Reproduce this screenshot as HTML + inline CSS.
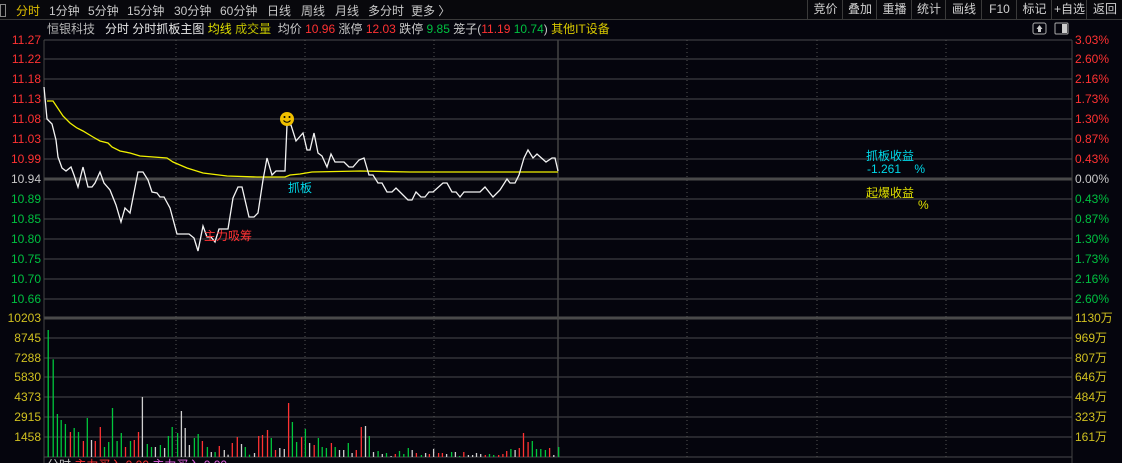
<!DOCTYPE html>
<html style="overflow:hidden;height:463px"><head><meta charset="utf-8">
<style>
body{margin:0;width:1122px;height:463px;overflow:hidden;background:#05050d;font-family:"Liberation Sans","Noto Sans CJK SC",sans-serif;font-size:12px;position:relative}
.t{position:absolute;white-space:nowrap;line-height:14px}
#top{position:absolute;left:0;top:0;width:1122px;height:19px;background:#08080c;border-bottom:1px solid #3a3a3a}
.tab{position:absolute;top:2px;color:#c8c8c8;font-size:12px}
.btn{position:absolute;top:0;height:19px;line-height:19px;text-align:center;color:#d0d0d0;border-left:1px solid #3a3a3a;font-size:12px}
.r{color:#ff3232}.g{color:#00c040}.w{color:#c8c8c8}.y{color:#e0e000}.c{color:#00d8e8}
.la{position:absolute;right:1081px;font-size:12px;line-height:14px;text-align:right}
.ra{position:absolute;left:1075px;font-size:12px;line-height:14px}
</style></head><body>
<div id="top">
<div style="position:absolute;left:0;top:4px;width:4px;height:11px;border:1px solid #888"></div>
<span class="tab" style="left:16px;color:#e0c000">分时</span>
<span class="tab" style="left:49px">1分钟</span>
<span class="tab" style="left:88px">5分钟</span>
<span class="tab" style="left:127px">15分钟</span>
<span class="tab" style="left:174px">30分钟</span>
<span class="tab" style="left:220px">60分钟</span>
<span class="tab" style="left:267px">日线</span>
<span class="tab" style="left:301px">周线</span>
<span class="tab" style="left:335px">月线</span>
<span class="tab" style="left:368px">多分时</span>
<span class="tab" style="left:411px">更多 〉</span>
<div class="btn" style="left:807px;width:35px">竞价</div>
<div class="btn" style="left:842px;width:34px">叠加</div>
<div class="btn" style="left:876px;width:35px">重播</div>
<div class="btn" style="left:911px;width:34px">统计</div>
<div class="btn" style="left:945px;width:36px">画线</div>
<div class="btn" style="left:981px;width:35px">F10</div>
<div class="btn" style="left:1016px;width:35px">标记</div>
<div class="btn" style="left:1051px;width:35px">+自选</div>
<div class="btn" style="left:1086px;width:36px">返回</div>
</div>
<div class="t" style="left:47px;top:22px;color:#b8b8b8">恒银科技 &nbsp;&nbsp;<span style="color:#e8e8e8">分时 分时抓板主图</span> <span class="y">均线</span> <span style="color:#c0c000">成交量</span> &nbsp;<span class="w">均价 </span><span class="r">10.96</span> <span class="w">涨停 </span><span class="r">12.03</span> <span class="w">跌停 </span><span class="g">9.85</span> <span class="w">笼子(</span><span class="r">11.19</span> <span class="g">10.74</span><span class="w">)</span> <span style="color:#d8c800">其他IT设备</span></div>
<svg style="position:absolute;left:0;top:0" width="1122" height="463">
<rect x="1033" y="23" width="13" height="11" rx="2" fill="none" stroke="#aaa"/><path d="M1039.5 25l-3 4h6z M1038 29h3v3h-3z" fill="#ccc"/>
<rect x="1055" y="23" width="13" height="11" rx="1" fill="none" stroke="#aaa"/><rect x="1062" y="24" width="5" height="9" fill="#ccc"/>
<g id="grid" stroke="#333338" stroke-width="1.5"></g>
<line x1="44" y1="40" x2="44" y2="463" stroke="#444" />
<line x1="1072" y1="40" x2="1072" y2="463" stroke="#444"/>
<g id="bars"></g>
<polyline id="avg" fill="none" stroke="#f0f000" stroke-width="1.3"/>
<polyline id="px" fill="none" stroke="#f4f4f4" stroke-width="1.3"/>
<circle cx="287" cy="119" r="7" fill="#f0c000"/><circle cx="284.5" cy="117" r="1" fill="#000"/><circle cx="289.5" cy="117" r="1" fill="#000"/><path d="M283.5 120.5q3.5 3.5 7 0" stroke="#000" fill="none"/>
</svg>
<div class="t c" style="left:288px;top:181px">抓板</div>
<div class="t r" style="left:204px;top:229px">主力吸筹</div>
<div class="t c" style="left:866px;top:149px">抓板收益</div>
<div class="t c" style="left:867px;top:162px">-1.261 &nbsp;&nbsp;&nbsp;%</div>
<div class="t y" style="left:866px;top:186px">起爆收益</div>
<div class="t y" style="left:918px;top:198px">%</div>
<div style="position:absolute;left:47px;top:458px;height:5px;width:300px;overflow:hidden"><div class="t" style="left:0;top:0;color:#c8c8c8">分时 <span class="r">主力买入 0.00</span> <span style="color:#e060e0">主力买入 0.00</span></div></div>
<div id="labels"></div>
<script>
var grid=document.getElementById('grid'),s='';
var ys=[40,59,79,99,119,139,159,179,199,219,239,259,279,299,318,338,358,377,397,417,437,457];
ys.forEach(function(y){var thick=(y==179||y==318);s+='<line x1="44" x2="1072" y1="'+y+'" y2="'+y+'" stroke="'+(thick?'#4a4a4a':'#333338')+'" stroke-width="'+(thick?3:1.5)+'"/>';});
[176,305,434,687,817,946].forEach(function(x){s+='<line x1="'+x+'" x2="'+x+'" y1="40" y2="457" stroke="#555" stroke-width="1" stroke-dasharray="1,3"/>';});
s+='<line x1="558" x2="558" y1="40" y2="457" stroke="#444"/>';
grid.innerHTML=s;
var px=[[44,87],[47,119],[52,124],[56,140],[58,157],[62,168],[66,171],[71,167],[74,175],[78,187],[83,167],[88,187],[92,187],[95,183],[100,172],[104,183],[110,190],[116,205],[121,222],[125,208],[130,213],[138,172],[143,172],[148,180],[152,192],[157,193],[160,197],[164,197],[170,208],[177,234],[189,234],[194,238],[198,251],[203,226],[207,237],[211,237],[215,242],[219,229],[228,229],[233,198],[238,187],[242,187],[249,217],[254,217],[258,213],[263,180],[267,158],[272,175],[276,171],[285,171],[287,125],[291,125],[296,141],[303,133],[307,150],[310,150],[314,133],[318,153],[322,156],[327,167],[331,154],[335,162],[344,162],[349,167],[353,167],[359,160],[364,158],[369,175],[373,175],[378,183],[382,183],[387,192],[392,192],[396,188],[403,195],[408,200],[412,200],[416,192],[421,197],[425,197],[429,192],[433,192],[443,183],[447,183],[452,192],[456,192],[460,197],[464,192],[480,192],[485,187],[493,197],[500,190],[507,179],[510,183],[515,183],[519,175],[524,158],[528,150],[533,158],[537,154],[546,162],[552,158],[555,158],[558,171]];
document.getElementById('px').setAttribute('points',px.map(function(p){return p.join(',')}).join(' '));
var av=[[47,101],[53,101],[63,116],[70,123],[77,128],[83,131],[93,137],[100,141],[108,143],[112,147],[120,151],[130,153],[140,156],[167,158],[173,162],[187,168],[203,173],[227,176],[257,177],[285,177],[290,175],[300,174],[312,172],[360,171],[410,172],[558,172]];
document.getElementById('avg').setAttribute('points',av.map(function(p){return p.join(',')}).join(' '));
var b="126,90,g;139,178,g;150,342,g;160,360,g;171,372,g;184,396,r;194,384,g;205,396,g;218,423,r;228,354,g;239,420,w;249,423,r;262,381,r;273,441,g;284,426,g;294,324,g;306,423,g;317,399,g;328,441,r;341,423,g;351,420,r;362,396,r;372,291,w;385,432,g;396,441,g;406,441,w;419,435,g;430,444,w;440,408,g;450,381,g;464,399,g;474,333,w;484,384,w;495,435,w;508,414,g;518,402,g;529,423,r;542,441,g;552,456,w;562,456,g;573,438,r;586,450,w;596,464,w;607,429,r;620,411,r;631,432,w;641,441,g;652,464,g;665,459,w;676,408,r;686,405,r;699,390,r;709,414,g;720,450,r;731,444,w;743,447,w;754,309,r;764,366,g;775,426,g;788,411,r;798,387,g;809,429,w;821,435,r;832,414,g;842,441,g;853,444,g;866,429,r;876,441,g;887,450,w;898,450,w;910,429,g;920,459,w;931,450,r;944,381,r;955,378,w;965,408,g;976,456,w;988,453,g;999,462,w;1010,459,g;1022,468,w;1033,462,r;1044,453,g;1055,462,g;1067,444,g;1077,450,w;1088,459,r;1101,465,g;1112,459,w;1122,462,r;1133,447,w;1146,459,r;1156,459,r;1167,462,w;1180,456,g;1190,456,w;1201,468,g;1212,456,r;1224,465,w;1235,465,w;1245,459,w;1256,462,w;1268,465,r;1279,462,g;1290,465,g;1303,465,r;1314,462,r;1324,453,r;1335,447,g;1346,450,w;1357,444,r;1368,399,r;1380,426,r;1391,423,g;1402,447,g;1413,447,g;1425,450,g;1436,444,r;1447,465,w;1460,441,g";
var col={g:'#00c83c',r:'#ff3232',w:'#d0d0d0'},bs='';
b.split(';').forEach(function(t){var a=t.split(',');var x=(+a[0])/2.613,y=300+(+a[1])/3;bs+='<line x1="'+x.toFixed(1)+'" x2="'+x.toFixed(1)+'" y1="'+y.toFixed(1)+'" y2="457" stroke="'+col[a[2]]+'" stroke-width="1.3"/>';});
document.getElementById('bars').innerHTML=bs;
var L=[['11.27','r'],['11.22','r'],['11.18','r'],['11.13','r'],['11.08','r'],['11.03','r'],['10.99','r'],['10.94','w'],['10.89','g'],['10.85','g'],['10.80','g'],['10.75','g'],['10.70','g'],['10.66','g']];
var R=[['3.03%','r'],['2.60%','r'],['2.16%','r'],['1.73%','r'],['1.30%','r'],['0.87%','r'],['0.43%','r'],['0.00%','w'],['0.43%','g'],['0.87%','g'],['1.30%','g'],['1.73%','g'],['2.16%','g'],['2.60%','g']];
var V=['10203','8745','7288','5830','4373','2915','1458'],VR=['1130万','969万','807万','646万','484万','323万','161万'];
var h='';
for(var i=0;i<14;i++){var y=ys[i]-7;h+='<div class="la '+L[i][1]+'" style="top:'+y+'px">'+L[i][0]+'</div><div class="ra '+R[i][1]+'" style="top:'+y+'px">'+R[i][0]+'</div>';}
for(var i=0;i<7;i++){var y=ys[14+i]-7;h+='<div class="la" style="top:'+y+'px;color:#d0c020">'+V[i]+'</div><div class="ra" style="top:'+y+'px;color:#d0c020">'+VR[i]+'</div>';}
document.getElementById('labels').innerHTML=h;
</script>
</body></html>
